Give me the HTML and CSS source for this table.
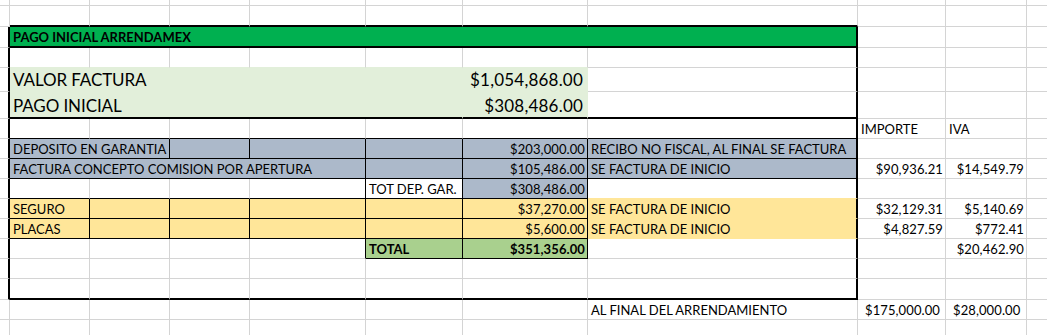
FILE: index.html
```html
<!DOCTYPE html>
<html lang="es">
<head>
<meta charset="utf-8">
<title>Pago inicial Arrendamex</title>
<link rel="stylesheet" href="styles.css">
</head>
<body>
<div class="sheet">
  <!-- row 0 -->
  <div class="c"></div><div class="c"></div><div class="c"></div><div class="c"></div><div class="c"></div><div class="c"></div><div class="c"></div><div class="c"></div><div class="c"></div><div class="c"></div><div class="c"></div>
  <!-- row 1 -->
  <div class="c"></div>
  <div class="c thk-b"></div><div class="c thk-b"></div><div class="c thk-b"></div><div class="c thk-b"></div><div class="c thk-b"></div><div class="c thk-b"></div><div class="c thk-b"></div>
  <div class="c"></div><div class="c"></div><div class="c"></div>
  <!-- row 2: title -->
  <div class="c thk-r"></div>
  <div class="c span7 f-green thk-r thk-b title">PAGO INICIAL ARRENDAMEX</div>
  <div class="c"></div><div class="c"></div><div class="c"></div>
  <!-- row 3 -->
  <div class="c thk-r"></div>
  <div class="c mint-b"></div><div class="c mint-b"></div><div class="c mint-b"></div><div class="c mint-b"></div><div class="c mint-b"></div><div class="c mint-b"></div>
  <div class="c thk-r"></div>
  <div class="c"></div><div class="c"></div><div class="c"></div>
  <!-- row 4 -->
  <div class="c thk-r"></div>
  <div class="c span5 f-mint big">VALOR FACTURA</div>
  <div class="c f-mint big num">$1,054,868.00</div>
  <div class="c thk-r"></div>
  <div class="c"></div><div class="c"></div><div class="c"></div>
  <!-- row 5 -->
  <div class="c thk-r"></div>
  <div class="c span5 f-mint thk-b big">PAGO INICIAL</div>
  <div class="c f-mint thk-b big num">$308,486.00</div>
  <div class="c thk-r thk-b"></div>
  <div class="c"></div><div class="c"></div><div class="c"></div>
  <!-- row 6 -->
  <div class="c thk-r"></div>
  <div class="c ln-b"></div><div class="c ln-b"></div><div class="c ln-b"></div><div class="c ln-b"></div><div class="c ln-b"></div><div class="c ln-b"></div>
  <div class="c thk-r ln-b"></div>
  <div class="c">IMPORTE</div><div class="c">IVA</div><div class="c"></div>
  <!-- row 7 -->
  <div class="c thk-r"></div>
  <div class="c span2 f-slate ln-r ln-b">DEPOSITO EN GARANTIA</div>
  <div class="c f-slate ln-r ln-b"></div>
  <div class="c f-slate ln-r ln-b"></div>
  <div class="c f-slate ln-r ln-b"></div>
  <div class="c f-slate ln-r ln-b num">$203,000.00</div>
  <div class="c f-slate thk-r ln-b">RECIBO NO FISCAL, AL FINAL SE FACTURA</div>
  <div class="c"></div><div class="c"></div><div class="c"></div>
  <!-- row 8 -->
  <div class="c thk-r"></div>
  <div class="c span4 f-slate ln-r ln-b">FACTURA CONCEPTO COMISION POR APERTURA</div>
  <div class="c f-slate ln-r ln-b"></div>
  <div class="c f-slate ln-r ln-b num">$105,486.00</div>
  <div class="c f-slate thk-r ln-b">SE FACTURA DE INICIO</div>
  <div class="c num">$90,936.21</div><div class="c num">$14,549.79</div><div class="c"></div>
  <!-- row 9 -->
  <div class="c thk-r"></div>
  <div class="c ln-b"></div><div class="c ln-b"></div><div class="c ln-b"></div>
  <div class="c ln-r ln-b"></div>
  <div class="c ln-r ln-b">TOT DEP. GAR.</div>
  <div class="c f-slate ln-r ln-b num">$308,486.00</div>
  <div class="c thk-r sand-b"></div>
  <div class="c"></div><div class="c"></div><div class="c"></div>
  <!-- row 10 -->
  <div class="c thk-r"></div>
  <div class="c f-sand ln-r ln-b">SEGURO</div>
  <div class="c f-sand ln-r ln-b"></div><div class="c f-sand ln-r ln-b"></div><div class="c f-sand ln-r ln-b"></div><div class="c f-sand ln-r ln-b"></div>
  <div class="c f-sand ln-r ln-b num">$37,270.00</div>
  <div class="c f-sand thk-r">SE FACTURA DE INICIO</div>
  <div class="c num">$32,129.31</div><div class="c num">$5,140.69</div><div class="c"></div>
  <!-- row 11 -->
  <div class="c thk-r"></div>
  <div class="c f-sand ln-r ln-b">PLACAS</div>
  <div class="c f-sand ln-r ln-b"></div><div class="c f-sand ln-r ln-b"></div><div class="c f-sand ln-r ln-b"></div><div class="c f-sand ln-r ln-b"></div>
  <div class="c f-sand ln-r ln-b num">$5,600.00</div>
  <div class="c f-sand thk-r">SE FACTURA DE INICIO</div>
  <div class="c num">$4,827.59</div><div class="c num">$772.41</div><div class="c"></div>
  <!-- row 12 -->
  <div class="c thk-r"></div>
  <div class="c"></div><div class="c"></div><div class="c"></div>
  <div class="c ln-r"></div>
  <div class="c f-leaf ln-r ln-b bold">TOTAL</div>
  <div class="c f-leaf ln-r ln-b bold num">$351,356.00</div>
  <div class="c thk-r"></div>
  <div class="c"></div><div class="c num">$20,462.90</div><div class="c"></div>
  <!-- row 13 -->
  <div class="c thk-r"></div>
  <div class="c"></div><div class="c"></div><div class="c"></div><div class="c"></div><div class="c"></div><div class="c"></div>
  <div class="c thk-r"></div>
  <div class="c"></div><div class="c"></div><div class="c"></div>
  <!-- row 14 -->
  <div class="c thk-r"></div>
  <div class="c thk-b"></div><div class="c thk-b"></div><div class="c thk-b"></div><div class="c thk-b"></div><div class="c thk-b"></div><div class="c thk-b"></div>
  <div class="c thk-r thk-b"></div>
  <div class="c"></div><div class="c"></div><div class="c"></div>
  <!-- row 15 -->
  <div class="c"></div>
  <div class="c"></div><div class="c"></div><div class="c"></div><div class="c"></div><div class="c"></div><div class="c"></div>
  <div class="c">AL FINAL DEL ARRENDAMIENTO</div>
  <div class="c acct"><span>$</span><span>175,000.00</span></div>
  <div class="c acct"><span>$</span><span>28,000.00</span></div>
  <div class="c"></div>
  <!-- row 16 -->
  <div class="c"></div><div class="c"></div><div class="c"></div><div class="c"></div><div class="c"></div><div class="c"></div><div class="c"></div><div class="c"></div><div class="c"></div><div class="c"></div><div class="c"></div>
</div>
</body>
</html>
```
FILE: styles.css
```css
* {
  box-sizing: border-box;
}

html,
body {
  margin: 0;
  background: #fff;
  overflow: hidden;
}

body {
  font-family: Lato, "Liberation Sans", sans-serif;
  font-size: 13px;
  color: #000;
}

.sheet {
  display: grid;
  grid-template-columns: 10px 80px 80px 80px 116px 97px 125px 270px 88px 81px 60px;
  grid-template-rows: 6px 21px 21px 20px 24px 27px 20px 20px 20px 20px 20px 20px 20px 20px 21px 20px 20px;
  width: 1087px;
}

.c {
  display: flex;
  align-items: flex-end;
  min-width: 0;
  padding: 0 2px 1px 3px;
  line-height: 15px;
  white-space: nowrap;
  border-right: 1px solid #d4d4d4;
  border-bottom: 1px solid #d4d4d4;
}

.num {
  justify-content: flex-end;
  padding-right: 2px;
  letter-spacing: 0.1px;
}

.acct {
  justify-content: space-between;
  padding-left: 7px;
  padding-right: 7px;
  letter-spacing: 0.1px;
}

.bold,
.title {
  font-weight: 700;
}

.big {
  font-size: 17px;
  line-height: 20px;
  letter-spacing: -0.1px;
}

.big.num {
  padding-right: 4px;
  letter-spacing: 0.2px;
}

.span2 { grid-column: span 2; }
.span4 { grid-column: span 4; }
.span5 { grid-column: span 5; }
.span7 { grid-column: span 7; }

/* fills hide the gridlines around them, as in a spreadsheet */
.f-green { background: #00b050; border-color: #00b050; }
.f-mint { background: #e2efda; border-color: #e2efda; }
.f-slate { background: #acb9ca; border-color: #acb9ca; }
.f-sand { background: #ffe699; border-color: #ffe699; }
.f-leaf { background: #a9d08e; border-color: #a9d08e; }

.mint-b { border-bottom-color: #e2efda; }
.sand-b { border-bottom-color: #ffe699; }

/* drawn cell borders */
.ln-r { border-right-color: #000; }
.ln-b { border-bottom-color: #000; }
.thk-r { border-right: 2px solid #000; }
.thk-b { border-bottom: 2px solid #000; }
```
